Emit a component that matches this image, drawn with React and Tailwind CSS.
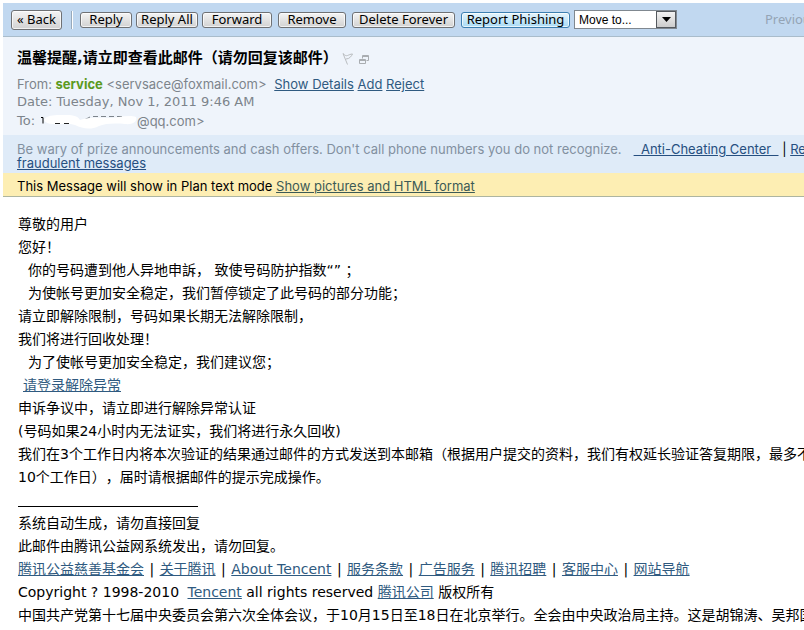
import clsx from 'clsx';

const toolbarButtons = [
    { label: 'Reply', size: 'w-[52px]' },
    { label: 'Reply All', size: 'ml-1 w-[62px]' },
    { label: 'Forward', size: 'ml-1 w-[70px]' },
    { label: 'Remove', size: 'ml-1.5 w-[68px]' },
    { label: 'Delete Forever', size: 'ml-1.5 w-[103px]' },
];

const footerLinks = ['腾讯公益慈善基金会', '关于腾讯', 'About Tencent', '服务条款', '广告服务', '腾讯招聘', '客服中心', '网站导航'];

const Link = ({ children, className }) => (
    <a href="#" className={clsx('underline', className || 'text-[#2f5a80]')}>{children}</a>
);

const ToolbarButton = ({ children, className }) => (
    <button type="button" className={clsx('flex shrink-0 items-center justify-center whitespace-nowrap rounded-[3px] border text-[13px] leading-none text-black shadow-[inset_0_0_0_1px_rgba(255,255,255,0.7)]', className)}>
        {children}
    </button>
);

const Toolbar = () => (
    <div className="flex h-[34px] items-center overflow-hidden border-b border-[#a9bccb] bg-[#c1d8f0] pl-2 font-['Noto_Sans','Liberation_Sans',sans-serif]">
        <ToolbarButton className="h-5 w-[51px] border-[#6f7174] bg-linear-to-b from-[#f4f4f4] to-[#d2d2d2]">« Back</ToolbarButton>
        <div className="ml-[9px] h-[18px] w-[2px] shrink-0 border-l border-[#98a9ba] bg-white" />
        <div className="ml-[7px] flex">
            {toolbarButtons.map(({ label, size }) => (
                <ToolbarButton key={label} className={clsx('h-4 border-[#6f7174] bg-linear-to-b from-[#f4f4f4] to-[#d2d2d2]', size)}>{label}</ToolbarButton>
            ))}
            <ToolbarButton className="ml-1.5 h-4 w-[109px] border-[#3c7fb1] bg-linear-to-b from-[#e4f4fc] to-[#a9dbf5]">Report Phishing</ToolbarButton>
        </div>
        <div className="relative ml-1 flex shrink-0">
            <select aria-label="Move to" className="h-[19px] w-[103px] appearance-none border border-[#808890] bg-white pl-1 font-['Liberation_Sans',sans-serif] text-[12px] leading-none text-black">
                <option>Move to...</option>
            </select>
            <span className="pointer-events-none absolute top-px right-px flex h-[17px] w-5 items-center justify-center border border-[#55595e] bg-linear-to-b from-[#f2f2f2] to-[#cccccc]">
                <svg width="9" height="5" viewBox="0 0 9 5"><path d="M0 0h9L4.5 5z" fill="#000" /></svg>
            </span>
        </div>
        <span className="ml-[88px] shrink-0 text-[13px] text-[#94a4b5]">Previous</span>
    </div>
);

const MessageHeader = () => (
    <div className="bg-[#eff4fb] pt-3 pb-[5px] pl-[14px] text-[13px] leading-[18px] text-[#7d848b]">
        <div className="flex items-center pb-2">
            <h1 className="text-[15px] leading-[18px] font-bold text-black">温馨提醒,请立即查看此邮件（请勿回复该邮件）</h1>
            <svg className="ml-1" width="12" height="13" viewBox="0 0 12 13" fill="none" stroke="#b9bcbf">
                <path d="M1 1.500l4.500 11M1 1.500c2 2 3 2.500 4.500 2s3-1.500 5-1.500c-1 2-3 5-6.500 5" />
            </svg>
            <svg className="mt-1 ml-[5px]" width="11" height="10" viewBox="0 0 11 10" fill="none" stroke="#a9adb1">
                <path d="M3.500 3.500v-3h6v5h-2M3.500 1.500h6M.500 4.500h6v4h-6zM.500 5.500h6" />
            </svg>
        </div>
        <p className="font-['Inter','DejaVu_Sans',sans-serif]">
            From: <b className="text-[#5b9a1f]">service</b> &lt;servsace@foxmail.com&gt;{' '}
            <span className="ml-1"><Link>Show Details</Link> <Link>Add</Link> <Link>Reject</Link></span>
        </p>
        <p>Date: Tuesday, Nov 1, 2011 9:46 AM</p>
        <div className="flex items-center pt-px">
            To:
            <svg className="ml-1" width="98" height="18" viewBox="0 0 98 18">
                <path d="M2 5.500h2v6" stroke="#000" fill="none" />
                <path d="M45 8l6-3M54 4.500h5M62 4.500h5M70 4.500h5M78 4.500h5" stroke="#7d848b" fill="none" />
                <path d="M5 8C8 2 20 3 26 3S38 3 41 8C50 5 62 6 70 6S90 2 97 5C99 9 94 13 86 12C78 11 66 11 60 14C52 18 44 17 36 13C28 10 20 13 14 12Q7 12 5 8z" fill="#fff" />
                <path d="M16 11.500h5M25 11.500h5" stroke="#222" />
            </svg>
            <span className="font-['Inter','DejaVu_Sans',sans-serif]">@qq.com&gt;</span>
        </div>
    </div>
);

const SafetyNotice = () => (
    <div className="overflow-hidden bg-[#dfebf8] pt-[7px] pb-[3px] pl-[14px] font-['Inter','DejaVu_Sans',sans-serif] text-[13px] leading-[14px] whitespace-nowrap text-[#8290a0]">
        Be wary of prize announcements and cash offers. Don't call phone numbers you do not recognize.
        <Link className="ml-3 whitespace-pre text-[#264f80]">{'  Anti-Cheating Center  '}</Link>
        <span className="text-black"> | </span>
        <Link className="text-[#264f80]">Report<br />fraudulent messages</Link>
    </div>
);

const MessageBody = () => (
    <div className="overflow-hidden pt-4 pl-[15px] text-[14px] leading-[23px] whitespace-nowrap text-black [text-spacing-trim:space-all]">
        <p>尊敬的用户</p>
        <p>您好！</p>
        <p className="pl-[10px]">你的号码遭到他人异地申訴， 致使号码防护指数“” ；</p>
        <p className="pl-[10px]">为使帐号更加安全稳定，我们暂停锁定了此号码的部分功能；</p>
        <p>请立即解除限制，号码如果长期无法解除限制，</p>
        <p>我们将进行回收处理！</p>
        <p className="pl-[10px]">为了使帐号更加安全稳定，我们建议您；</p>
        <p className="pl-[5px]"><Link>请登录解除异常</Link></p>
        <p>申诉争议中，请立即进行解除异常认证</p>
        <p>(号码如果24小时内无法证实，我们将进行永久回收)</p>
        <p>我们在3个工作日内将本次验证的结果通过邮件的方式发送到本邮箱（根据用户提交的资料，我们有权延长验证答复期限，最多不</p>
        <p>10个工作日），届时请根据邮件的提示完成操作。</p>
        <hr className="mt-[17px] mb-[5px] w-[180px] border-black" />
        <p>系统自动生成，请勿直接回复</p>
        <p>此邮件由腾讯公益网系统发出，请勿回复。</p>
        <p>
            {footerLinks.map((label, i) => (
                <span key={label}>{i > 0 && <span className="mx-px"> | </span>}<Link>{label}</Link></span>
            ))}
        </p>
        <p>Copyright ? 1998-2010 <Link className="ml-1 text-[#2f5a80]">Tencent</Link> all rights reserved <Link>腾讯公司</Link> 版权所有</p>
        <p>中国共产党第十七届中央委员会第六次全体会议，于10月15日至18日在北京举行。全会由中央政治局主持。这是胡锦涛、吴邦国</p>
    </div>
);

const App = () => {
    return (
        <main className="overflow-hidden bg-white pt-[3px] pl-[3px] font-['DejaVu_Sans','Noto_Sans_CJK_SC',sans-serif]">
            <Toolbar />
            <MessageHeader />
            <SafetyNotice />
            <div className="overflow-hidden border-b border-[#adb5a0] bg-[#fdeeb3] pt-1 pb-[1px] pl-[14px] font-['Inter','DejaVu_Sans',sans-serif] text-[13px] leading-[18px] whitespace-nowrap text-black">
                This Message will show in Plan text mode <Link className="text-[#3c5a56]">Show pictures and HTML format</Link>
            </div>
            <MessageBody />
        </main>
    );
};

export default App;
